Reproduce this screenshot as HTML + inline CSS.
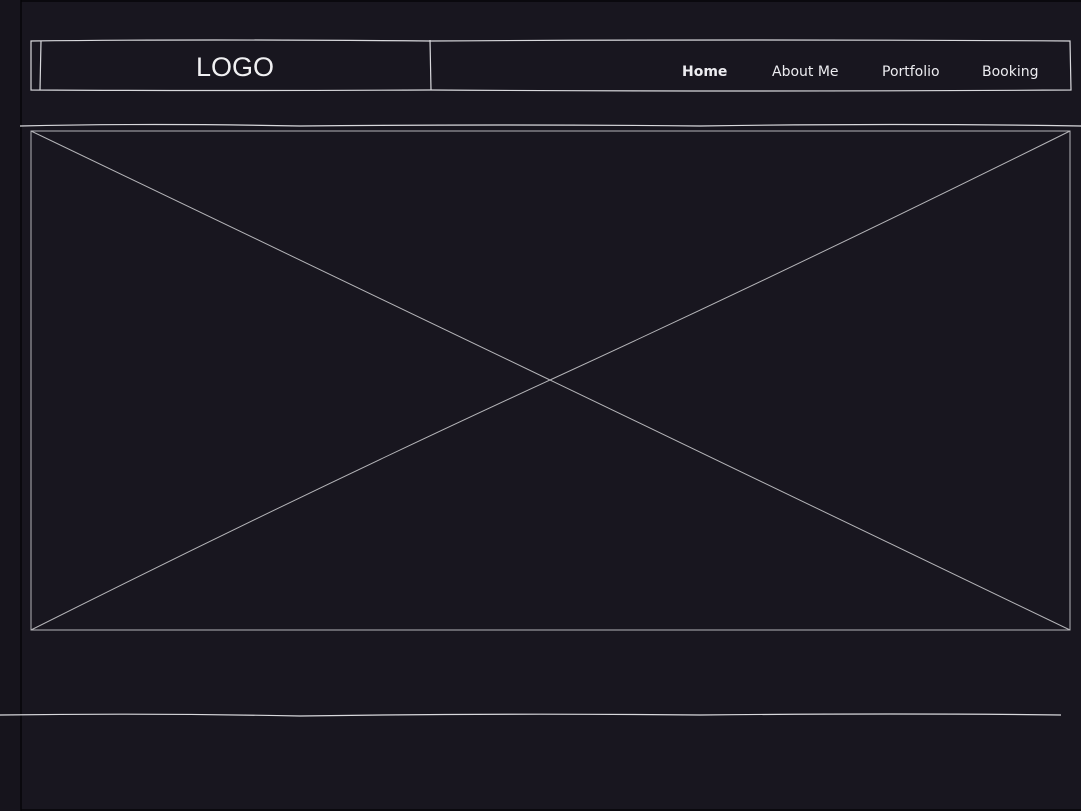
<!DOCTYPE html>
<html><head><meta charset="utf-8"><style>
html,body{margin:0;padding:0;background:#18161f;width:1081px;height:811px;overflow:hidden}
svg{display:block}
</style></head><body>
<svg width="1081" height="811" viewBox="0 0 1081 811" xmlns="http://www.w3.org/2000/svg">
<rect x="0" y="0" width="1081" height="811" fill="#18161f"/>
<rect x="0" y="0" width="20" height="811" fill="#16141c"/>
<line x1="21" y1="0" x2="21" y2="811" stroke="#050508" stroke-width="1.5"/>
<line x1="21" y1="1" x2="1081" y2="1" stroke="#050508" stroke-width="1.5"/>
<line x1="21" y1="810" x2="1081" y2="810" stroke="#050508" stroke-width="1.5"/>
<g fill="none" stroke="#d8d8dc" stroke-width="1.2">
<path d="M31 41 Q200 39 430 41 Q750 39 1070 41 L1071 90 Q750 92 430 90 Q200 91 31 90 Z"/>
<line x1="41" y1="41" x2="40" y2="90"/>
<line x1="430" y1="40" x2="431" y2="90"/>
<path d="M20 126 Q150 123 300 126 Q500 124 700 126 Q900 123 1081 126"/>
<path d="M0 715 Q150 713 300 716 Q500 713 700 715 Q900 713 1061 715"/>
</g>
<g fill="none" stroke="#b4b4b8" stroke-width="1">
<rect x="31" y="131" width="1039" height="499"/>
<path d="M31 131 Q300 260 550 380 Q800 500 1070 630"/>
<path d="M31 630 Q300 495 550 380 Q800 265 1070 131"/>
</g>
<text x="235" y="76" text-anchor="middle" font-family="Liberation Sans, sans-serif" font-size="27" fill="#f0f0f2">LOGO</text>
<g font-family="DejaVu Sans, sans-serif" font-size="14" fill="#ececf0">
<text x="682" y="76" font-weight="bold">Home</text>
<text x="772" y="76">About Me</text>
<text x="882" y="76">Portfolio</text>
<text x="982" y="76">Booking</text>
</g>
</svg>
</body></html>
